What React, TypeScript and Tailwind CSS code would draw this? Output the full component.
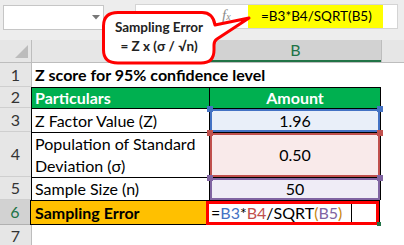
import React from 'react'

const font = "font-['Lato','Noto_Sans',sans-serif]"

function RowHead({ n, h, active }: { n: number; h: string; active?: boolean }) {
  return (
    <div
      className={`${h} w-[32px] shrink-0 flex items-center justify-center text-[16px] border-b ${
        active
          ? 'bg-[#d2d2d2] text-[#217346] border-r-2 border-r-[#217346] border-b-[#b0b0b0]'
          : 'bg-[#e6e6e6] text-[#333] border-r border-r-[#bdbdbd] border-b-[#cfcfcf]'
      }`}
    >
      {n}
    </div>
  )
}

function Corners({ color }: { color: string }) {
  return (
    <>
      <span className={`absolute -top-[3px] -left-[3px] w-[6px] h-[6px] ${color}`} />
      <span className={`absolute -top-[3px] -right-[3px] w-[6px] h-[6px] ${color}`} />
    </>
  )
}

export default function App() {
  return (
    <div className={`relative w-[404px] h-[245px] overflow-hidden bg-white text-black ${font}`}>
      {/* Formula bar */}
      <div className="h-[40px] bg-[#ededed] flex items-start">
        <div className="ml-[3px] mt-[5px] w-[101px] h-[25px] bg-white border border-[#c6c6c6] relative">
          <svg className="absolute left-[88px] top-[9px]" width="8" height="5" viewBox="0 0 8 5">
            <path d="M0 0 H8 L4 4.5 Z" fill="#777" />
          </svg>
        </div>
        <div className="ml-[31px] mt-[4px] w-[263px] h-[25px] bg-white border border-[#d4d4d4] flex items-stretch">
          <div className="w-[112px] pl-[86px] flex items-start pt-[3px] italic text-[#8c8c8c] font-['Liberation_Serif',serif]">
            <span className="text-[15px] leading-none">f</span>
            <span className="text-[10px] leading-none mt-[4px]">x</span>
          </div>
          <div className="w-[135px] bg-[#ffff00] flex items-center pl-[13px] text-[13.5px] whitespace-nowrap">
            =B3*B4/SQRT(B5)
          </div>
        </div>
      </div>

      {/* Column headers */}
      <div className="h-[23px] flex bg-[#e6e6e6] border-b border-[#bdbdbd]">
        <div className="w-[32px] shrink-0 relative border-r border-[#bdbdbd]">
          <svg className="absolute left-[15px] top-[5px]" width="14" height="14" viewBox="0 0 14 14">
            <path d="M13 0 V13 H0 Z" fill="#bcbcbc" />
          </svg>
        </div>
        <div className="w-[178px] shrink-0 border-r border-[#bdbdbd]" />
        <div className="w-[171px] shrink-0 bg-[#d2d2d2] border-b-2 border-[#217346] flex items-center justify-center text-[16px] text-[#217346]">
          B
        </div>
        <div className="flex-1 border-l border-[#bdbdbd]" />
      </div>

      {/* Row 1 */}
      <div className="flex">
        <RowHead n={1} h="h-[24px]" />
        <div className="h-[24px] pl-[3px] flex items-center text-[16px] font-bold whitespace-nowrap">
          Z score for 95% confidence level
        </div>
      </div>

      {/* Row 2 */}
      <div className="flex">
        <RowHead n={2} h="h-[21px]" />
        <div className="h-[21px] w-[178px] -ml-px border border-r-0 border-b-0 border-black bg-[#00b050] text-white font-bold text-[16px] pl-[3px] flex items-center">
          Particulars
        </div>
        <div className="h-[21px] w-[172px] border border-b-0 border-black bg-[#00b050] text-white font-bold text-[16px] flex items-center justify-center">
          Amount
        </div>
      </div>

      {/* Row 3 */}
      <div className="flex">
        <RowHead n={3} h="h-[24px]" />
        <div className="h-[24px] w-[178px] -ml-px border-l border-t border-black pl-[3px] text-[16px] flex items-center">
          Z Factor Value (Z)
        </div>
        <div className="h-[24px] w-[172px] relative border-l border-t border-r border-black bg-[#e9eff9] text-[16px] flex items-center justify-center">
          <span className="absolute inset-0 border-2 border-[#4472c4]" />
          <Corners color="bg-[#4472c4]" />
          <span className="relative">1.96</span>
        </div>
      </div>

      {/* Row 4 */}
      <div className="flex">
        <RowHead n={4} h="h-[45px]" />
        <div className="h-[45px] w-[178px] -ml-px border-l border-t border-black pl-[3px] text-[16px] leading-[22px] flex items-center">
          Population of Standard
          <br />
          Deviation (σ)
        </div>
        <div className="h-[45px] w-[172px] relative border-l border-t border-r border-black bg-[#f9eaea] text-[16px] flex items-center justify-center">
          <span className="absolute inset-0 border-2 border-[#c0504d]" />
          <Corners color="bg-[#c0504d]" />
          <span className="relative">0.50</span>
        </div>
      </div>

      {/* Row 5 */}
      <div className="flex">
        <RowHead n={5} h="h-[23px]" />
        <div className="h-[23px] w-[178px] -ml-px border-l border-t border-black pl-[3px] text-[16px] flex items-center">
          Sample Size (n)
        </div>
        <div className="h-[23px] w-[172px] relative border-l border-t border-r border-black bg-[#efecf6] text-[16px] flex items-center justify-center">
          <span className="absolute inset-0 border-2 border-[#8064a2]" />
          <Corners color="bg-[#8064a2]" />
          <span className="relative">50</span>
        </div>
      </div>

      {/* Row 6 */}
      <div className="flex">
        <RowHead n={6} h="h-[25px]" active />
        <div className="h-[25px] w-[178px] -ml-[2px] border-l border-y border-black bg-[#ffc000] pl-[4px] text-[16px] font-bold flex items-center">
          Sampling Error
        </div>
        <div className="h-[25px] w-[172px] relative border border-black text-[16px] flex items-center pl-[2px]">
          <span className="absolute -left-[3px] top-0 right-0 -bottom-px border-[3px] border-[#ff0000]" />
          <span className="absolute -right-[2px] -bottom-[2px] w-[4px] h-[4px] bg-[#217346]" />
          <span className="relative whitespace-pre">
            =<span className="text-[#4472c4]">B3</span>*<span className="text-[#c0504d]">B4</span>/SQRT
            <span className="text-[#c8870f]">(</span>
            <span className="text-[#8064a2]">B5</span>
            <span className="text-[#c8870f]">)</span>
          </span>
          <span className="relative ml-[9px] w-px h-[18px] bg-black" />
        </div>
      </div>

      {/* Row 7 */}
      <div className="flex">
        <RowHead n={7} h="h-[22px]" />
      </div>

      {/* Callout */}
      <div className="absolute left-[100px] top-[8px] w-[152px] h-[58px]">
        <svg className="absolute inset-0" width="152" height="58" viewBox="0 0 152 58">
          <path
            d="M18 4.5 H102 Q113 4.5 115 17 L149 10 L117 31 Q114 33 114 37 V42 Q114 55 101 55 H18 Q3.5 55 3.5 42 V18 Q3.5 4.5 18 4.5 Z"
            fill="#fff"
            stroke="#ff0000"
            strokeWidth="3"
            strokeLinejoin="round"
          />
        </svg>
        <div className="absolute left-[4px] top-[10px] w-[110px] flex flex-col items-center text-[13.5px] font-bold leading-[19px] text-[#222]">
          <span>Sampling Error</span>
          <span>= Z x (σ / √n)</span>
        </div>
      </div>
    </div>
  )
}
